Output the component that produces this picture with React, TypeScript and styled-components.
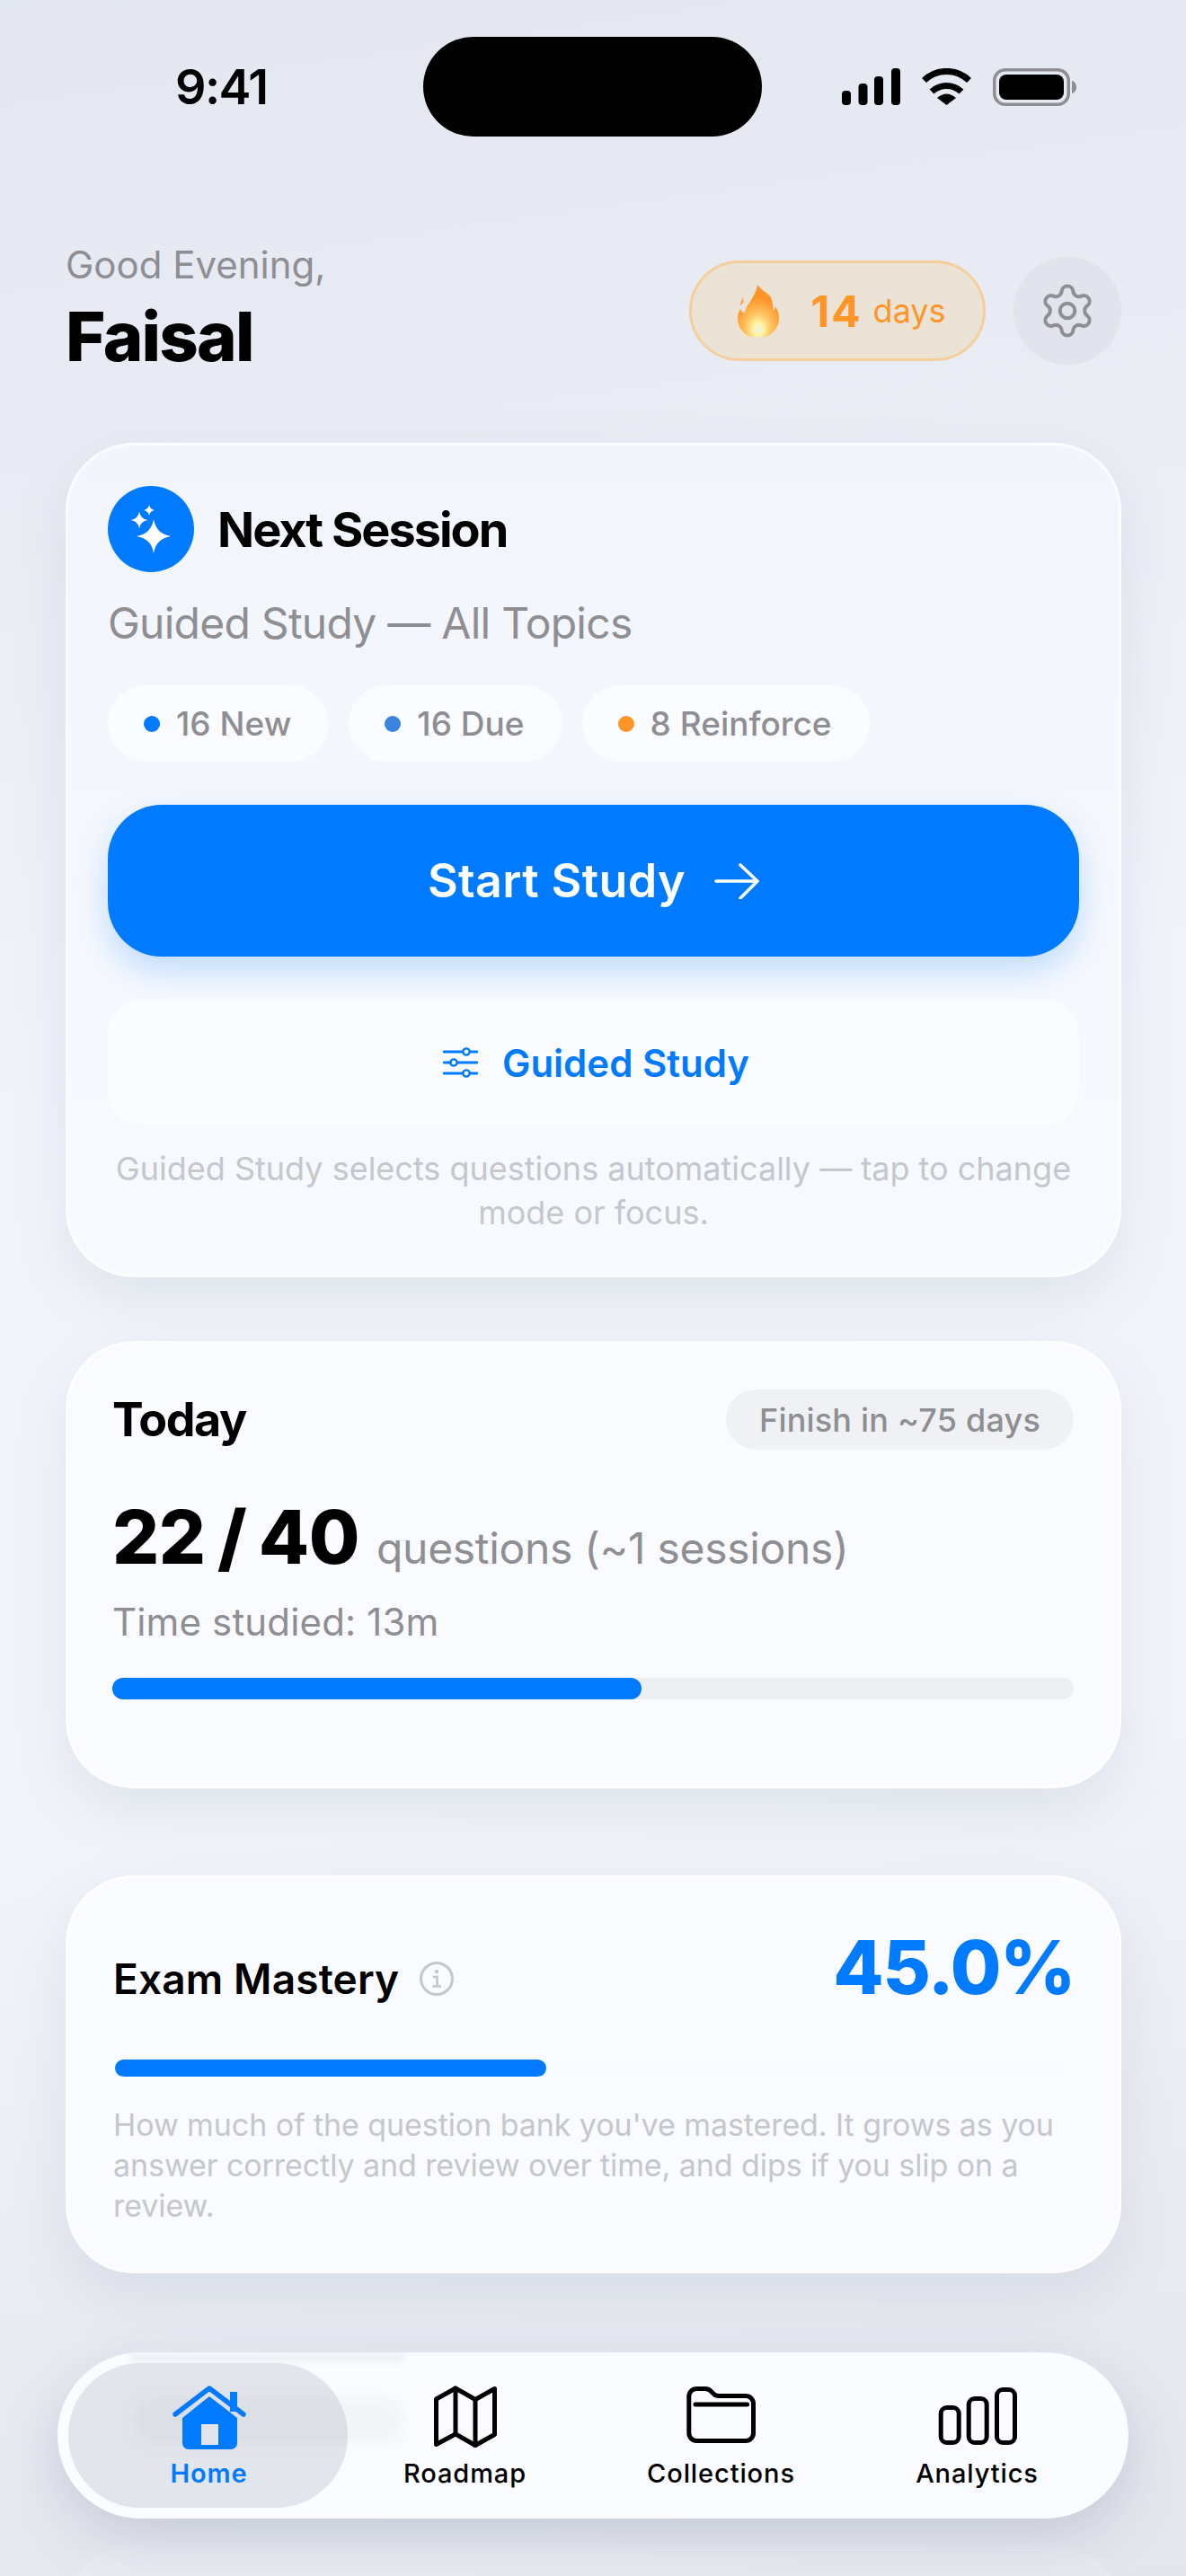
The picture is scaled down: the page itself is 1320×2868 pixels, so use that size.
import React from "react";
import styled, { createGlobalStyle } from "styled-components";
import { Settings } from "lucide-react";

const GlobalStyle = createGlobalStyle`
  html, body {
    margin: 0;
    padding: 0;
  }
  body {
    font-family: Inter, "Liberation Sans", sans-serif;
    -webkit-font-smoothing: antialiased;
  }
  * {
    box-sizing: border-box;
  }
`;

const BLUE = "#007aff";
const ORANGE = "#ff9427";
const GRAY = "#8e8e93";
const FAINT = "#c5c7cc";

const Page = styled.div`
  position: relative;
  width: 1320px;
  height: 2868px;
  overflow: hidden;
  padding: 41px 72px 0 73px;
  background: linear-gradient(172deg, #e3e7ef 0%, #e9ecf4 18%, #f1f4fb 42%, #f1f4fa 68%, #e9ecf3 84%, #e3e6ed 100%);
`;

const StatusBar = styled.div`
  display: flex;
  align-items: center;
  height: 111px;
`;

const Clock = styled.div`
  width: 398px;
  padding-left: 122px;
  font-size: 54px;
  font-weight: 600;
  letter-spacing: -1.6px;
  color: #000;
  white-space: nowrap;
`;

const Island = styled.div`
  width: 377px;
  height: 111px;
  border-radius: 56px;
  background: #000;
`;

const StatusIcons = styled.div`
  display: flex;
  align-items: center;
  margin-left: 89px;
  gap: 23px;
`;

const Header = styled.header`
  display: flex;
  justify-content: space-between;
  align-items: flex-start;
  margin-top: 118px;
  margin-bottom: 79px;
`;

const Greeting = styled.div`
  font-size: 42px;
  line-height: 50px;
  color: ${GRAY};
`;

const Name = styled.div`
  margin-top: 14px;
  font-size: 76px;
  line-height: 80px;
  font-weight: 800;
  letter-spacing: -1.8px;
  color: #000;
`;

const Actions = styled.div`
  display: flex;
  align-items: center;
  gap: 31px;
  margin-top: 16px;
`;

const StreakPill = styled.div`
  display: flex;
  align-items: center;
  justify-content: center;
  width: 330px;
  height: 112px;
  padding-left: 10px;
  border: 3px solid #f5cf9b;
  border-radius: 56px;
  background: #ece3d7;
  color: ${ORANGE};
`;

const StreakCount = styled.span`
  margin-left: 35px;
  font-size: 48px;
  font-weight: 700;
  letter-spacing: 2px;
`;

const StreakUnit = styled.span`
  margin-left: 12px;
  font-size: 36px;
`;

const GearButton = styled.div`
  display: flex;
  align-items: center;
  justify-content: center;
  width: 120px;
  height: 120px;
  border-radius: 50%;
  background: #e1e4ec;
  color: ${GRAY};
`;

const Card = styled.section<{ $tint?: boolean }>`
  border: 3px solid rgba(255, 255, 255, 0.75);
  border-radius: 76px;
  background: ${(p) => (p.$tint ? "linear-gradient(180deg, #f2f5fb 0%, #f7faff 100%)" : "#f9fbff")};
  box-shadow: 0 24px 60px rgba(130, 140, 170, 0.16);
`;

const SessionCard = styled(Card)`
  padding: 45px 44px 44px;
`;

const SessionHead = styled.div`
  display: flex;
  align-items: center;
  gap: 26px;
`;

const SparkBadge = styled.div`
  display: flex;
  width: 96px;
  height: 96px;
  border-radius: 50%;
  background: ${BLUE};
`;

const SessionTitle = styled.h2`
  margin: 0;
  font-size: 54px;
  font-weight: 700;
  letter-spacing: -2px;
  color: #000;
`;

const SessionSub = styled.div`
  margin-top: 27px;
  font-size: 48px;
  line-height: 60px;
  color: ${GRAY};
  letter-spacing: -0.75px;
`;

const Chips = styled.div`
  display: flex;
  gap: 22px;
  margin-top: 39px;
`;

const Chip = styled.div`
  display: flex;
  align-items: center;
  gap: 18px;
  height: 85px;
  padding: 0 42px 0 40px;
  border-radius: 43px;
  background: #fafcff;
  font-size: 37px;
  font-weight: 500;
  color: ${GRAY};
`;

const Dot = styled.span<{ $color: string }>`
  width: 18px;
  height: 18px;
  border-radius: 50%;
  background: ${(p) => p.$color};
`;

const StartButton = styled.button`
  display: flex;
  align-items: center;
  justify-content: center;
  gap: 32px;
  width: 100%;
  height: 169px;
  margin-top: 48px;
  border: 0;
  border-radius: 60px;
  background: ${BLUE};
  box-shadow: 0 16px 36px rgba(0, 122, 255, 0.22);
  font-family: inherit;
  font-size: 52px;
  font-weight: 600;
  letter-spacing: 0.4px;
  color: #fff;
`;

const ModeButton = styled.button`
  display: flex;
  align-items: center;
  justify-content: center;
  gap: 27px;
  width: 100%;
  height: 140px;
  margin-top: 48px;
  padding: 0 0 0 6px;
  border: 0;
  border-radius: 38px;
  background: #fbfcff;
  font-family: inherit;
  font-size: 42px;
  font-weight: 600;
  color: ${BLUE};
`;

const SessionNote = styled.p`
  margin: 24px 0 0;
  font-size: 36px;
  line-height: 49px;
  text-align: center;
  color: ${FAINT};
`;

const TodayCard = styled(Card)`
  margin-top: 71px;
  padding: 51px 50px 96px 49px;
`;

const RowBetween = styled.div`
  display: flex;
  justify-content: space-between;
  align-items: center;
`;

const TodayTitle = styled.h2`
  margin: 0;
  font-size: 52px;
  font-weight: 700;
  letter-spacing: -1.4px;
  color: #000;
`;

const FinishPill = styled.div`
  display: flex;
  align-items: center;
  height: 67px;
  padding: 0 37px;
  border-radius: 34px;
  background: #eff1f5;
  font-size: 36px;
  font-weight: 500;
  letter-spacing: 0.2px;
  color: ${GRAY};
`;

const CountRow = styled.div`
  display: flex;
  align-items: baseline;
  gap: 19px;
  margin-top: 53px;
`;

const CountValue = styled.span`
  font-size: 82px;
  line-height: 90px;
  font-weight: 800;
  letter-spacing: -0.5px;
  word-spacing: -4px;
  color: #000;
`;

const CountUnit = styled.span`
  font-size: 48px;
  line-height: 60px;
  letter-spacing: -0.3px;
  color: ${GRAY};
`;

const TimeStudied = styled.div`
  margin-top: 24px;
  font-size: 42px;
  line-height: 50px;
  letter-spacing: 0.15px;
  color: ${GRAY};
`;

const Track = styled.div<{ $color: string; $height: number }>`
  height: ${(p) => p.$height}px;
  border-radius: ${(p) => p.$height / 2}px;
  background: ${(p) => p.$color};
`;

const TodayTrack = styled(Track)`
  margin-top: 37px;
`;

const Fill = styled.div`
  height: 100%;
  border-radius: inherit;
  background: ${BLUE};
`;

const MasteryCard = styled(Card)`
  margin-top: 97px;
  padding: 55px 49px 50px 50px;
`;

const MasteryHead = styled.div`
  display: flex;
  justify-content: space-between;
  align-items: baseline;
`;

const MasteryLabel = styled.div`
  display: flex;
  align-items: baseline;
  gap: 23px;
`;

const MasteryTitle = styled.h2`
  margin: 0;
  font-size: 46px;
  font-weight: 600;
  letter-spacing: 0.15px;
  color: #000;
`;

const InfoIcon = styled.svg`
  align-self: center;
  width: 38px;
  height: 38px;
`;

const MasteryValue = styled.div`
  font-size: 82px;
  line-height: 90px;
  font-weight: 800;
  letter-spacing: -1.4px;
  color: ${BLUE};
`;

const MasteryTrack = styled(Track)`
  margin-top: 54px;
  padding: 3px 2px;
`;

const MasteryNote = styled.p`
  margin: 28px 0 0;
  font-size: 34px;
  line-height: 45px;
  letter-spacing: -0.08px;
  color: ${FAINT};
`;

const NextCard = styled.div`
  height: 300px;
  margin-top: 302px;
  border-radius: 76px;
  background: rgba(238, 241, 247, 0.3);
`;

const TabBar = styled.nav`
  position: absolute;
  left: 64px;
  top: 2619px;
  display: grid;
  grid-template-columns: repeat(4, 1fr);
  width: 1192px;
  height: 185px;
  padding: 35px 26px 0;
  overflow: hidden;
  border-radius: 93px;
  background: #fafcff;
  box-shadow: 0 20px 60px rgba(110, 120, 150, 0.26);
`;

// content scrolled under the glass bar, seen blurred through it
const GlassSmear = styled.div`
  position: absolute;
  left: 84px;
  top: 50px;
  width: 302px;
  height: 52px;
  border-radius: 20px;
  background: rgba(90, 100, 125, 0.05);
  filter: blur(9px);
`;

const GlassEdge = styled.div`
  position: absolute;
  left: 81px;
  top: 1px;
  width: 305px;
  height: 10px;
  background: rgba(90, 100, 125, 0.08);
  filter: blur(3px);
`;

const Tab = styled.div<{ $active?: boolean }>`
  position: relative;
  display: flex;
  flex-direction: column;
  align-items: center;
  color: ${(p) => (p.$active ? BLUE : "#000")};

  ${(p) =>
    p.$active &&
    `
    &::before {
      content: "";
      position: absolute;
      left: -14px;
      right: -12px;
      top: -23px;
      height: 161px;
      border-radius: 80px;
      background: rgba(120, 128, 150, 0.18);
    }
  `}
`;

const TabIcon = styled.svg`
  position: relative;
  display: block;
  height: 76px;
  overflow: visible;
`;

const TabLabel = styled.span<{ $active?: boolean }>`
  position: relative;
  margin-top: 6px;
  font-size: 29px;
  line-height: 36px;
  font-weight: ${(p) => (p.$active ? 600 : 500)};
  letter-spacing: 0.9px;
`;

const star = (cx: number, cy: number, r: number) => {
  const k = r * 0.14;
  return `M${cx} ${cy - r}Q${cx + k} ${cy - k} ${cx + r} ${cy}Q${cx + k} ${cy + k} ${cx} ${cy + r}Q${cx - k} ${cy + k} ${cx - r} ${cy}Q${cx - k} ${cy - k} ${cx} ${cy - r}Z`;
};

const SignalIcon = () => (
  <svg width="65" height="41" viewBox="0 0 65 41" fill="#000">
    <rect x="0" y="25" width="10" height="16" rx="4" />
    <rect x="18.5" y="17" width="10" height="24" rx="4" />
    <rect x="36" y="9" width="10" height="32" rx="4" />
    <rect x="55" y="0" width="10" height="41" rx="4" />
  </svg>
);

const WifiIcon = () => (
  <svg width="57" height="41" viewBox="0 0 57 41" fill="none" stroke="#000" strokeWidth="7">
    <path d="M3.5 13.5A36 36 0 0 1 53.5 13.5" />
    <path d="M12 26A24 24 0 0 1 45 26" />
    <path d="M18 33Q28.5 24 39 33L28.5 41Z" fill="#000" stroke="none" />
  </svg>
);

const BatteryIcon = () => (
  <svg width="93" height="42" viewBox="0 0 93 42">
    <rect x="1.75" y="1.75" width="82.5" height="38.5" rx="12" fill="none" stroke="#8e8e93" strokeWidth="3.5" />
    <rect x="7" y="7" width="72" height="28" rx="8" fill="#000" />
    <path d="M88 14c3 .5 5 3 5 7s-2 6.500-5 7z" fill="#8e8e93" />
  </svg>
);

const FlameIcon = () => (
  <svg width="46" height="58" viewBox="0 0 46 58">
    <defs>
      <radialGradient id="flameCore" cx="50%" cy="85%" r="60%">
        <stop offset="0%" stopColor="#f1f1ee" />
        <stop offset="22%" stopColor="#fff3a0" />
        <stop offset="48%" stopColor="#ffc766" />
        <stop offset="100%" stopColor="#ff9427" />
      </radialGradient>
    </defs>
    <path
      d="M22 0C26 6 34 9 37 14C39 19 39 24 40 29C42 27 42 25 42 24C45 28 46 33 46 38C46 47 39 55 32 58H14C6 55 0 47 0 38C0 33 1 30 3 27C4 30 6 31 8 31C9 26 11 22 14 19C17 13 21 8 22 0Z"
      fill="url(#flameCore)"
    />
    <path d="M6 14C5 17 3 20 3 23C5 22 7 19 6 14Z" fill="#ff9427" />
  </svg>
);

const SparkIcon = () => (
  <svg width="96" height="96" viewBox="0 0 96 96" fill="#fff">
    <path d={star(51, 56, 19)} />
    <path d={star(35, 38, 9.5)} />
    <path d={star(46, 27, 6)} />
  </svg>
);

const ArrowIcon = () => (
  <svg width="50" height="40" viewBox="0 0 50 40" fill="none" stroke="#fff" strokeWidth="3.6" strokeLinecap="round" strokeLinejoin="round">
    <path d="M2 20H48M29 2L48 20L29 39" />
  </svg>
);

const SlidersIcon = () => (
  <svg width="39" height="34" viewBox="0 0 39 34" fill="none" stroke={BLUE} strokeWidth="2.8" strokeLinecap="round">
    <path d="M1 5H38M1 17H38M1 29H38" />
    <circle cx="26" cy="5" r="3.6" fill="#fbfcff" strokeWidth="2.4" />
    <circle cx="12" cy="17" r="3.6" fill="#fbfcff" strokeWidth="2.4" />
    <circle cx="26" cy="29" r="3.6" fill="#fbfcff" strokeWidth="2.4" />
  </svg>
);

const HomeIcon = () => (
  <TabIcon width="84" viewBox="0 0 84 76" fill={BLUE}>
    <path d="M42 14L73 38V66a7 7 0 0 1-7 7H19a7 7 0 0 1-7-7V38Z" />
    <rect x="65" y="9" width="8" height="22" />
    <path d="M4 34L42 5L80 34" fill="none" stroke={BLUE} strokeWidth="5.500" strokeLinecap="round" strokeLinejoin="round" />
    <rect x="33" y="45" width="19" height="23" fill="#e2e5ec" />
  </TabIcon>
);

const MapIcon = () => (
  <TabIcon width="76" viewBox="0 0 76 76" fill="none" stroke="#000" strokeWidth="5" strokeLinejoin="round" strokeLinecap="round">
    <path d="M5.500 17L27 5L49 17.500L70.500 5.500V56.500L49 68.500L27 56L5.500 67.500Z" />
    <path d="M27 5V56M49 17.500V68.500" />
  </TabIcon>
);

const FolderIcon = () => (
  <TabIcon width="84" viewBox="0 0 84 76" fill="none" stroke="#000" strokeWidth="5">
    <path d="M5.800 14a8.500 8.500 0 0 1 8.500-8.500H24c3 0 5 1 7 3.500l2 2c2 2 3.500 2.500 6 2.500H69a8.500 8.500 0 0 1 8.500 8.500V55a8.500 8.500 0 0 1-8.500 8.500H14.300a8.500 8.500 0 0 1-8.500-8.500Z" />
    <path d="M13 23H70.500" strokeLinecap="round" />
  </TabIcon>
);

const ChartIcon = () => (
  <TabIcon width="94" viewBox="0 0 94 76" fill="none" stroke="#000" strokeWidth="5">
    <rect x="6.200" y="26.500" width="20" height="39" rx="6.500" />
    <rect x="37.200" y="16.500" width="20" height="49" rx="6.500" />
    <rect x="68.500" y="6.500" width="20" height="59" rx="6.500" />
  </TabIcon>
);

export default function App() {
  return (
    <Page>
      <GlobalStyle />
      <StatusBar>
        <Clock>9:41</Clock>
        <Island />
        <StatusIcons>
          <SignalIcon />
          <WifiIcon />
          <BatteryIcon />
        </StatusIcons>
      </StatusBar>

      <Header>
        <div>
          <Greeting>Good Evening,</Greeting>
          <Name>Faisal</Name>
        </div>
        <Actions>
          <StreakPill>
            <FlameIcon />
            <StreakCount>14</StreakCount>
            <StreakUnit>days</StreakUnit>
          </StreakPill>
          <GearButton>
            <Settings size={66} strokeWidth={1.45} />
          </GearButton>
        </Actions>
      </Header>

      <SessionCard $tint>
        <SessionHead>
          <SparkBadge>
            <SparkIcon />
          </SparkBadge>
          <SessionTitle>Next Session</SessionTitle>
        </SessionHead>
        <SessionSub>Guided Study — All Topics</SessionSub>
        <Chips>
          <Chip>
            <Dot $color={BLUE} />
            16 New
          </Chip>
          <Chip>
            <Dot $color="#3a84e0" />
            16 Due
          </Chip>
          <Chip>
            <Dot $color={ORANGE} />8 Reinforce
          </Chip>
        </Chips>
        <StartButton>
          Start Study
          <ArrowIcon />
        </StartButton>
        <ModeButton>
          <SlidersIcon />
          Guided Study
        </ModeButton>
        <SessionNote>Guided Study selects questions automatically — tap to change mode or focus.</SessionNote>
      </SessionCard>

      <TodayCard>
        <RowBetween>
          <TodayTitle>Today</TodayTitle>
          <FinishPill>Finish in ~75 days</FinishPill>
        </RowBetween>
        <CountRow>
          <CountValue>22 / 40</CountValue>
          <CountUnit>questions (~1 sessions)</CountUnit>
        </CountRow>
        <TimeStudied>Time studied: 13m</TimeStudied>
        <TodayTrack $color="#eceef2" $height={24}>
          <Fill style={{ width: "55%" }} />
        </TodayTrack>
      </TodayCard>

      <MasteryCard>
        <MasteryHead>
          <MasteryLabel>
            <MasteryTitle>Exam Mastery</MasteryTitle>
            <InfoIcon viewBox="0 0 38 38" fill="none" stroke={FAINT} strokeWidth="3">
              <circle cx="19" cy="19" r="17.500" />
              <circle cx="19" cy="11" r="2.200" fill={FAINT} stroke="none" />
              <path d="M15 17H19.500V27M14.500 27.500H24" strokeWidth="2.600" />
            </InfoIcon>
          </MasteryLabel>
          <MasteryValue>45.0%</MasteryValue>
        </MasteryHead>
        <MasteryTrack $color="#f8fbff" $height={25}>
          <Fill style={{ width: "45%" }} />
        </MasteryTrack>
        <MasteryNote>
          How much of the question bank you've mastered. It grows as you answer correctly and review over time, and dips if you slip on a review.
        </MasteryNote>
      </MasteryCard>

      <NextCard />

      <TabBar>
        <GlassEdge />
        <GlassSmear />
        <Tab $active>
          <HomeIcon />
          <TabLabel $active>Home</TabLabel>
        </Tab>
        <Tab>
          <MapIcon />
          <TabLabel>Roadmap</TabLabel>
        </Tab>
        <Tab>
          <FolderIcon />
          <TabLabel>Collections</TabLabel>
        </Tab>
        <Tab>
          <ChartIcon />
          <TabLabel>Analytics</TabLabel>
        </Tab>
      </TabBar>
    </Page>
  );
}
